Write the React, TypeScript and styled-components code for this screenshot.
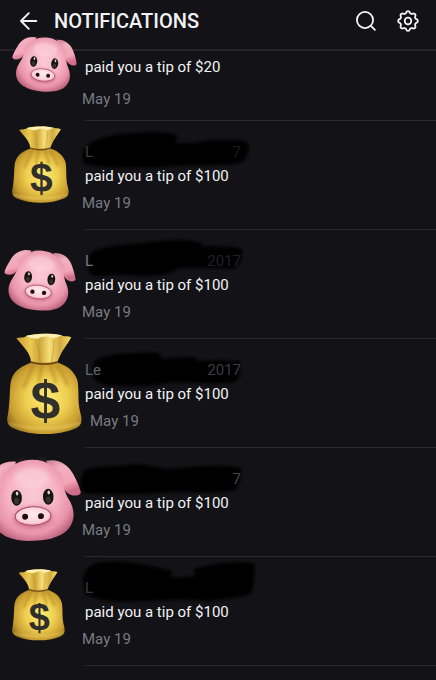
import React, { useId } from 'react';
import styled, { createGlobalStyle } from 'styled-components';

const GlobalStyle = createGlobalStyle`
  * { box-sizing: border-box; }
  body {
    margin: 0;
    background: #121217;
    font-family: Roboto, "Liberation Sans", sans-serif;
    overflow-x: hidden;
  }
`;

const Page = styled.main`
  min-height: 100vh;
  background: #121217;
  color: #f2f2f4;
`;

const Header = styled.header`
  display: flex;
  align-items: center;
  height: 51px;
  padding: 0 16px 8px;
  border-bottom: 2px solid #232328;
`;

const IconButton = styled.button`
  display: flex;
  align-items: center;
  justify-content: center;
  width: 24px;
  height: 24px;
  padding: 0;
  border: 0;
  background: none;
  color: #f4f4f6;
  cursor: pointer;
`;

const Title = styled.h1`
  flex: 1;
  margin: 0 0 0 14px;
  font-size: 20px;
  line-height: 24px;
  font-weight: 500;
`;

const Actions = styled.div`
  display: flex;
  gap: 18px;
`;

const List = styled.ul`
  margin: 0;
  padding: 0;
  list-style: none;
`;

const Row = styled.li`
  position: relative;
  display: grid;
  grid-template-columns: 85px minmax(0, 1fr);
`;

const Body = styled.div<{ $cut?: boolean }>`
  grid-column: 2;
  position: relative;
  padding: ${(p) => (p.$cut ? '4px 0 9px' : '19px 0 14px')};
  border-bottom: 1px solid #29292e;
`;

const Name = styled.div`
  position: relative;
  display: flex;
  justify-content: space-between;
  width: 156px;
  height: 24px;
  font-size: 15px;
  line-height: 24px;
`;

const NamePart = styled.span<{ $tone: string }>`
  color: ${(p) => p.$tone};
`;

const Message = styled.p`
  position: relative;
  margin: 0;
  font-size: 15px;
  line-height: 24px;
`;

const DateLine = styled.time<{ $cut?: boolean; $indent?: boolean }>`
  display: block;
  margin-top: ${(p) => (p.$cut ? 8 : 3)}px;
  margin-left: ${(p) => (p.$indent ? 5 : -3)}px;
  color: #7b7b81;
  font-size: 15px;
  line-height: 24px;
`;

const Scribble = styled.svg`
  position: absolute;
  left: -10px;
  top: 0;
  width: 200px;
  height: 50px;
  overflow: visible;
`;

const Sticker = styled.div<{ $x: number; $y: number; $w: number; $tilt?: number }>`
  position: absolute;
  z-index: 1;
  left: ${(p) => p.$x}px;
  top: ${(p) => p.$y}px;
  width: ${(p) => p.$w}px;
  transform: rotate(${(p) => p.$tilt ?? 0}deg);

  svg {
    display: block;
    width: 100%;
    overflow: visible;
  }
`;

function BackIcon() {
  return (
    <svg width="24" height="24" viewBox="0 0 24 24" fill="none" stroke="currentColor" strokeWidth="1.9" strokeLinecap="round" strokeLinejoin="round">
      <path d="M20.3 12H5M12.8 4.2L5 12l7.8 7.8" />
    </svg>
  );
}

function SearchIcon() {
  return (
    <svg width="24" height="24" viewBox="0 0 24 24" fill="none" stroke="currentColor" strokeWidth="1.8" strokeLinecap="round">
      <circle cx="11" cy="11" r="8.1" />
      <path d="M16.9 16.9l4 4" />
    </svg>
  );
}

const gearPath =
  Array.from({ length: 96 }, (_, i) => {
    const a = (i / 96) * Math.PI * 2;
    const c = Math.cos(8 * a);
    const r = 8.8 + 1 * Math.sign(c) * Math.pow(Math.abs(c), 0.65);
    return `${i ? 'L' : 'M'}${(12 + r * Math.sin(a)).toFixed(2)} ${(12 - r * Math.cos(a)).toFixed(2)}`;
  }).join('') + 'Z';

function GearIcon() {
  return (
    <svg width="24" height="24" viewBox="0 0 24 24" fill="none" stroke="currentColor" strokeWidth="1.8" strokeLinejoin="round">
      <path d={gearPath} />
      <circle cx="12" cy="12" r="3.3" />
    </svg>
  );
}

function Pig() {
  const id = useId();
  const face = `${id}face`;
  const ear = `${id}ear`;
  const snout = `${id}snout`;
  const soft = `${id}soft`;
  return (
    <svg viewBox="0 0 300 250" role="img" aria-label="Pig">
      <defs>
        <radialGradient id={face} cx="50%" cy="44%" r="60%">
          <stop offset="0" stopColor="#fbc9d5" />
          <stop offset="0.5" stopColor="#f6b3c3" />
          <stop offset="0.8" stopColor="#e993a9" />
          <stop offset="1" stopColor="#b9617b" />
        </radialGradient>
        <linearGradient id={ear} x1="0" y1="0" x2="0.3" y2="1">
          <stop offset="0" stopColor="#c98292" />
          <stop offset="0.3" stopColor="#f3b0be" />
          <stop offset="0.75" stopColor="#f4a6b9" />
          <stop offset="1" stopColor="#cf6e88" />
        </linearGradient>
        <radialGradient id={snout} cx="50%" cy="40%" r="60%">
          <stop offset="0" stopColor="#ffeaf0" />
          <stop offset="0.75" stopColor="#fbd0da" />
          <stop offset="1" stopColor="#f0a9ba" />
        </radialGradient>
        <filter id={soft} x="-20%" y="-20%" width="140%" height="140%">
          <feGaussianBlur stdDeviation="6" />
        </filter>
      </defs>
      <path d="M104 7C68 0 38 20 24 50C12 75 4 96 3 108C12 120 34 116 46 104L90 50Z" fill={`url(#${ear})`} />
      <path d="M196 7C232 0 262 20 276 50C288 75 296 96 297 108C288 120 266 116 254 104L210 50Z" fill={`url(#${ear})`} />
      <path d="M58 70C70 34 98 10 130 5M242 70C230 34 202 10 170 5" fill="none" stroke="#b9617b" strokeWidth="7" opacity=".35" filter={`url(#${soft})`} />
      <path d="M150 2C194 2 224 24 238 62C246 88 250 108 262 130C284 172 272 212 234 232C208 245 180 248 150 248C120 248 92 245 66 232C28 212 16 172 38 130C50 108 54 88 62 62C76 24 106 2 150 2Z" fill={`url(#${face})`} />
      <ellipse cx="150" cy="58" rx="54" ry="32" fill="#ffe0e7" opacity=".4" filter={`url(#${soft})`} />
      <ellipse cx="150" cy="177" rx="58" ry="32" fill="#b94f6c" opacity=".65" filter={`url(#${soft})`} />
      <ellipse cx="150" cy="173" rx="54" ry="28" fill={`url(#${snout})`} stroke="#a94b64" strokeWidth="3" />
      <ellipse cx="126" cy="174" rx="9" ry="9" fill="#1f0c0e" />
      <ellipse cx="174" cy="174" rx="9" ry="9" fill="#1f0c0e" />
      <ellipse cx="102" cy="116" rx="16" ry="24" fill="#161413" />
      <ellipse cx="198" cy="116" rx="16" ry="24" fill="#161413" />
      <ellipse cx="102" cy="125" rx="8" ry="10" fill="#37322f" />
      <ellipse cx="198" cy="125" rx="8" ry="10" fill="#37322f" />
      <ellipse cx="104" cy="103" rx="4" ry="6" fill="#d8d3d1" />
      <ellipse cx="200" cy="103" rx="4" ry="6" fill="#d8d3d1" />
    </svg>
  );
}

function MoneyBag() {
  const id = useId();
  const body = `${id}body`;
  const flare = `${id}flare`;
  const soft = `${id}soft`;
  const clip = `${id}clip`;
  const bodyPath =
    'M74 88C50 96 20 110 12 142C7 164 10 200 3 242C-3 264 2 278 20 285C70 307 154 307 204 285C222 278 226 264 220 242C210 205 216 180 211 144C202 110 174 96 150 88Z';
  return (
    <svg viewBox="0 0 224 304" role="img" aria-label="Money bag">
      <defs>
        <radialGradient id={body} cx="53%" cy="50%" r="62%">
          <stop offset="0" stopColor="#fdec74" />
          <stop offset="0.45" stopColor="#efcf50" />
          <stop offset="0.8" stopColor="#c99d31" />
          <stop offset="1" stopColor="#8a691c" />
        </radialGradient>
        <linearGradient id={flare} x1="0" x2="1">
          <stop offset="0" stopColor="#c59b30" />
          <stop offset="0.25" stopColor="#ecca52" />
          <stop offset="0.42" stopColor="#cda53a" />
          <stop offset="0.6" stopColor="#f6de78" />
          <stop offset="0.8" stopColor="#d3ab40" />
          <stop offset="1" stopColor="#f5dc70" />
        </linearGradient>
        <filter id={soft} x="-30%" y="-30%" width="160%" height="160%">
          <feGaussianBlur stdDeviation="5" />
        </filter>
        <clipPath id={clip}>
          <path d={bodyPath} />
        </clipPath>
      </defs>
      <path d="M28 16C40 11 48 17 58 9C86 -1 140 -1 165 8C175 11 180 7 192 13C180 36 164 50 150 88C130 96 92 96 72 88C70 58 48 42 28 16Z" fill={`url(#${flare})`} />
      <path d="M57 8C86 1 140 1 165 7C154 12 144 14 137 16C124 8 104 9 93 17C78 16 66 14 57 8Z" fill="#fff1b4" />
      <path d="M84 22C96 44 98 64 100 87M140 20C142 48 136 68 132 88" fill="none" stroke="#b5841f" strokeWidth="3" opacity=".5" />
      <path d={bodyPath} fill={`url(#${body})`} />
      <g clipPath={`url(#${clip})`}>
        <path d="M82 94C68 114 64 138 48 164M104 94C98 120 99 134 94 150M130 94C134 116 142 128 146 150M148 94C162 116 172 128 180 156" fill="none" stroke="#ab7c1c" strokeWidth="9" opacity=".5" filter={`url(#${soft})`} />
        <path d="M4 270C60 290 165 290 222 268" fill="none" stroke="#ffe77d" strokeWidth="6" opacity=".55" filter={`url(#${soft})`} />
      </g>
      <path d="M72 87C95 95 128 95 150 87" fill="none" stroke="#6b4712" strokeWidth="5" strokeLinecap="round" />
      <text x="115" y="258" textAnchor="middle" fontFamily="Liberation Sans, sans-serif" fontWeight="700" fontSize="160" fill="#302f2c">
        $
      </text>
    </svg>
  );
}

interface Item {
  kind: 'pig' | 'bag';
  x: number;
  y: number;
  w: number;
  tilt?: number;
  amount: string;
  cut?: boolean;
  indent?: boolean;
  start?: string;
  startTone?: string;
  end?: string;
  endTone?: string;
  ink?: string;
}

const items: Item[] = [
  { kind: 'pig', x: 11, y: -14, w: 66, tilt: 6, amount: '$20', cut: true },
  {
    kind: 'bag', x: 12, y: 5, w: 57, amount: '$100', start: 'L', startTone: '#3c3c3f', end: '7', endTone: '#1c1c1e',
    ink: 'M22 104C20 62 80 42 150 35C210 28 290 28 308 42L300 63L360 64C400 50 490 50 518 60C526 84 515 112 500 121C470 130 440 126 410 130C310 127 250 138 200 137C130 140 50 134 25 124Z',
  },
  {
    kind: 'pig', x: 3, y: 20, w: 73, tilt: 6, amount: '$100', start: 'L', startTone: '#77777b', end: '2017', endTone: '#222225',
    ink: 'M42 75C50 50 130 42 200 37C280 26 360 24 380 38L380 47C420 44 480 46 500 54C506 78 494 108 470 114C410 112 350 106 310 112C285 134 220 138 170 133C110 124 60 148 42 124Z',
  },
  {
    kind: 'bag', x: 7, y: -6, w: 75, amount: '$100', indent: true, start: 'Le', startTone: '#66666a', end: '2017', endTone: '#3c3c40',
    ink: 'M58 70C55 45 160 35 250 39L262 56C310 54 340 48 366 55L368 64C400 60 440 62 494 64C500 88 494 120 480 125C420 134 350 126 280 128C220 138 150 142 90 134C54 128 44 100 58 70Z',
  },
  {
    kind: 'pig', x: -17, y: 11, w: 99, tilt: -2, amount: '$100', end: '7', endTone: '#47474b',
    ink: 'M22 78C30 48 80 54 140 50C190 42 230 50 270 60C360 54 430 44 496 56C504 76 490 112 480 124C420 136 350 126 280 130C190 138 110 136 30 132C14 118 14 94 22 78Z',
  },
  {
    kind: 'bag', x: 12, y: 12, w: 53, amount: '$100', start: 'L', startTone: '#38383b',
    ink: 'M25 82C20 42 44 14 85 12C150 4 240 28 290 38L286 58C310 58 340 60 362 52L356 34C410 16 490 8 538 18C540 55 536 90 528 106C500 120 450 122 400 130C320 116 250 132 190 128C120 136 70 126 30 108Z',
  },
];

function Notification({ item, index }: { item: Item; index: number }) {
  const blur = `ink-edge-${index}`;
  return (
    <Row>
      <Sticker $x={item.x} $y={item.y} $w={item.w} $tilt={item.tilt}>
        {item.kind === 'pig' ? <Pig /> : <MoneyBag />}
      </Sticker>
      <Body $cut={item.cut}>
        {item.ink && (
          <>
            <Scribble viewBox="0 -3 600 150" aria-hidden="true">
              <filter id={blur}>
                <feGaussianBlur stdDeviation="4" />
              </filter>
              <path d={item.ink} fill="#000" filter={`url(#${blur})`} />
            </Scribble>
            <Name>
              <NamePart $tone={item.startTone ?? '#222225'}>{item.start}</NamePart>
              <NamePart $tone={item.endTone ?? '#222225'}>{item.end}</NamePart>
            </Name>
          </>
        )}
        <Message>paid you a tip of {item.amount}</Message>
        <DateLine $cut={item.cut} $indent={item.indent}>May 19</DateLine>
      </Body>
    </Row>
  );
}

export default function App() {
  return (
    <Page>
      <GlobalStyle />
      <Header>
        <IconButton aria-label="Back"><BackIcon /></IconButton>
        <Title>NOTIFICATIONS</Title>
        <Actions>
          <IconButton aria-label="Search"><SearchIcon /></IconButton>
          <IconButton aria-label="Settings"><GearIcon /></IconButton>
        </Actions>
      </Header>
      <List>
        {items.map((item, i) => (
          <Notification key={i} item={item} index={i} />
        ))}
      </List>
    </Page>
  );
}
